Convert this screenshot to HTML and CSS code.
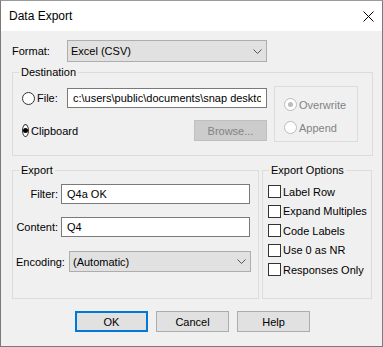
FILE: index.html
```html
<!DOCTYPE html>
<html lang="en">
<head>
    <meta charset="UTF-8">
    <title>Data Export</title>
    <link rel="stylesheet" href="styles.css">
</head>
<body>
    <div class="dialog">
        <div class="titlebar">
            <span class="title">Data Export</span>
            <svg class="close" width="11" height="11" viewBox="0 0 11 11">
                <path d="M0.5 0.5 L10.5 10.5 M10.5 0.5 L0.5 10.5" stroke="#000" stroke-width="1" fill="none"/>
            </svg>
        </div>

        <div class="content">
            <div class="format-row">
                <span class="format-label">Format:</span>
                <div class="select format-select">
                    <span>Excel (CSV)</span>
                    <svg class="chevron" width="9" height="5" viewBox="0 0 9 5"><path d="M0.5 0.5 L4.5 4.5 L8.5 0.5" stroke="#555" fill="none"/></svg>
                </div>
            </div>

            <div class="group destination">
                <span class="caption">Destination</span>
                <div class="dest-left">
                    <div class="dest-row">
                        <label class="radio-label">
                            <span class="radio"></span>File:
                        </label>
                        <input class="textbox path" type="text" value="c:\users\public\documents\snap desktop\exports">
                    </div>
                    <div class="dest-row clip-row">
                        <label class="radio-label">
                            <span class="radio checked"></span>Clipboard
                        </label>
                        <button class="btn browse" disabled>Browse...</button>
                    </div>
                </div>
                <div class="mode-box">
                    <label class="radio-label disabled">
                        <span class="radio checked"></span>Overwrite
                    </label>
                    <label class="radio-label disabled">
                        <span class="radio"></span>Append
                    </label>
                </div>
            </div>

            <div class="lower">
                <div class="group export">
                    <span class="caption">Export</span>
                    <div class="field">
                        <span class="field-label">Filter:</span>
                        <input class="textbox" type="text" value="Q4a OK">
                    </div>
                    <div class="field">
                        <span class="field-label">Content:</span>
                        <input class="textbox" type="text" value="Q4">
                    </div>
                    <div class="field encoding">
                        <span class="field-label">Encoding:</span>
                        <div class="select enc-select">
                            <span>(Automatic)</span>
                            <svg class="chevron" width="9" height="5" viewBox="0 0 9 5"><path d="M0.5 0.5 L4.5 4.5 L8.5 0.5" stroke="#555" fill="none"/></svg>
                        </div>
                    </div>
                </div>

                <div class="group options">
                    <span class="caption">Export Options</span>
                    <label class="check"><span class="box"></span>Label Row</label>
                    <label class="check"><span class="box"></span>Expand Multiples</label>
                    <label class="check"><span class="box"></span>Code Labels</label>
                    <label class="check"><span class="box"></span>Use 0 as NR</label>
                    <label class="check"><span class="box"></span>Responses Only</label>
                </div>
            </div>

            <div class="buttons">
                <button class="btn default">OK</button>
                <button class="btn">Cancel</button>
                <button class="btn">Help</button>
            </div>
        </div>
    </div>
</body>
</html>
```

FILE: styles.css
```css
body {
    margin: 0;
    background: #4a4a4a;
    font-family: "Liberation Sans", Arial, sans-serif;
    font-size: 11px;
    color: #000;
}
.dialog {
    width: 383px;
    height: 347px;
    box-sizing: border-box;
    border: 1px solid #7a7a7a;
    border-top-color: #9a9a9a;
    background: #f0f0f0;
    display: flex;
    flex-direction: column;
}
.titlebar {
    height: 30px;
    flex: none;
    background: #fff;
    display: flex;
    align-items: center;
    justify-content: space-between;
    padding: 0 8px 0 8px;
    font-size: 12px;
}
.close {
    display: block;
}
.content {
    padding: 9px 9px 0 11px;
}
.format-row {
    display: flex;
    align-items: center;
}
.format-label {
    width: 55px;
}
.select {
    box-sizing: border-box;
    height: 22px;
    background: #e1e1e1;
    border: 1px solid #adadad;
    display: flex;
    align-items: center;
    justify-content: space-between;
    padding: 0 4px 0 3px;
}
.format-select {
    width: 200px;
}
.chevron {
    display: block;
}
.group {
    position: relative;
    border: 1px solid #dcdcdc;
}
.caption {
    position: absolute;
    top: -7px;
    left: 6px;
    padding: 0 2px;
    line-height: 13px;
    background: #f0f0f0;
}
.destination {
    margin-top: 10px;
    display: flex;
    gap: 7px;
    padding: 13px 0 13px 9px;
}
.dest-left {
    width: 245px;
    margin-top: 2px;
    display: flex;
    flex-direction: column;
    gap: 12px;
}
.dest-row {
    display: flex;
    align-items: center;
    height: 20px;
}
.dest-row .radio-label {
    width: 45px;
}
.clip-row {
    height: 21px;
    justify-content: space-between;
}
.radio-label {
    display: flex;
    align-items: center;
    gap: 2px;
    white-space: nowrap;
}
.radio {
    box-sizing: border-box;
    width: 13px;
    height: 13px;
    border: 1px solid #333;
    border-radius: 50%;
    background: #fff;
    display: flex;
    align-items: center;
    justify-content: center;
}
.radio.checked::after {
    content: "";
    width: 5px;
    height: 5px;
    border-radius: 50%;
    background: #000;
}
.radio-label.disabled {
    color: #838383;
}
.disabled .radio {
    border-color: #bcbcbc;
}
.disabled .radio.checked::after {
    background: #bcbcbc;
}
.textbox {
    box-sizing: border-box;
    height: 20px;
    width: 189px;
    margin: 0;
    border: 1px solid #7a7a7a;
    background: #fff;
    font: inherit;
    padding: 0 5px;
    outline: none;
}
.path {
    width: 200px;
}
.btn {
    box-sizing: border-box;
    width: 73px;
    height: 21px;
    margin: 0;
    padding: 0;
    background: #e1e1e1;
    border: 1px solid #adadad;
    font: inherit;
    color: #000;
}
.browse {
    background: #cccccc;
    border-color: #bfbfbf;
    color: #838383;
}
.mode-box {
    box-sizing: border-box;
    width: 84px;
    height: 56px;
    border: 1px solid #dcdcdc;
    padding: 11px 0 0 9px;
    display: flex;
    flex-direction: column;
    gap: 10px;
}
.lower {
    margin-top: 14px;
    display: flex;
    gap: 3px;
}
.export {
    box-sizing: border-box;
    width: 247px;
    height: 129px;
    padding: 13px 0 0 3px;
    display: flex;
    flex-direction: column;
    gap: 13px;
}
.field {
    display: flex;
    align-items: center;
}
.field-label {
    width: 42px;
    padding-right: 3px;
    text-align: right;
}
.encoding {
    margin-top: 1px;
}
.encoding .field-label {
    width: 53px;
    padding-right: 0;
    text-align: left;
}
.enc-select {
    width: 182px;
    height: 21px;
}
.options {
    box-sizing: border-box;
    width: 110px;
    height: 129px;
    padding: 14px 0 0 5px;
    display: flex;
    flex-direction: column;
    gap: 6.5px;
}
.check {
    display: flex;
    align-items: center;
    gap: 2px;
    height: 13px;
    white-space: nowrap;
}
.box {
    box-sizing: border-box;
    width: 13px;
    height: 13px;
    border: 1px solid #333;
    background: #fff;
}
.buttons {
    margin-top: 12px;
    display: flex;
    justify-content: center;
    gap: 8px;
}
.btn.default {
    border: 2px solid #0078d7;
}
```
